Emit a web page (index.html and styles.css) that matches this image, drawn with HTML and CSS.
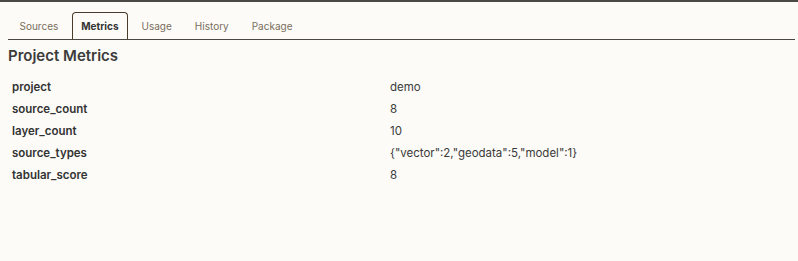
FILE: index.html
```html
<!DOCTYPE html>
<html>
<head>
<meta charset="utf-8">
<link rel="stylesheet" href="styles.css">
</head>
<body>
<div class="topline"></div>
<div class="page">
  <div class="tabs">
    <div class="tab">Sources</div>
    <div class="tab active">Metrics</div>
    <div class="tab">Usage</div>
    <div class="tab">History</div>
    <div class="tab">Package</div>
  </div>
  <h2 class="title">Project Metrics</h2>
  <div class="metrics">
    <div class="key">project</div><div class="val">demo</div>
    <div class="key">source_count</div><div class="val">8</div>
    <div class="key">layer_count</div><div class="val">10</div>
    <div class="key">source_types</div><div class="val">{"vector":2,"geodata":5,"model":1}</div>
    <div class="key">tabular_score</div><div class="val">8</div>
  </div>
</div>
</body>
</html>
```

FILE: styles.css
```css
html, body {
  margin: 0;
  padding: 0;
  background: #fcfbf7;
}
body {
  font-family: Inter, "Noto Sans", sans-serif;
  color: #333;
}
.topline {
  height: 2px;
  background: #4a4a45;
}
.page {
  padding: 0 3px 0 8px;
}
.tabs {
  display: flex;
  margin-top: 10px;
  border-bottom: 1px solid #4a4740;
  height: 27px;
  align-items: flex-end;
}
.tab {
  font-size: 10px;
  color: #7a6e5e;
  padding: 0 8px;
  height: 26px;
  line-height: 27px;
  margin: 0 2.5px;
  border: 1px solid transparent;
  border-bottom: none;
  border-radius: 4px 4px 0 0;
}
.tab.active {
  font-weight: 700;
  color: #333;
  border-color: #4a3c2c;
}
.title {
  margin: 6px 0 0 0;
  font-size: 15px;
  font-weight: 600;
  color: #3b3b3b;
  line-height: 20px;
}
.metrics {
  display: grid;
  grid-template-columns: 378px auto;
  margin-top: 10px;
}
.key, .val {
  font-size: 11.5px;
  line-height: 22px;
  padding-left: 4px;
}
.key {
  font-weight: 600;
}
.val {
  color: #3a3a3a;
}
```
